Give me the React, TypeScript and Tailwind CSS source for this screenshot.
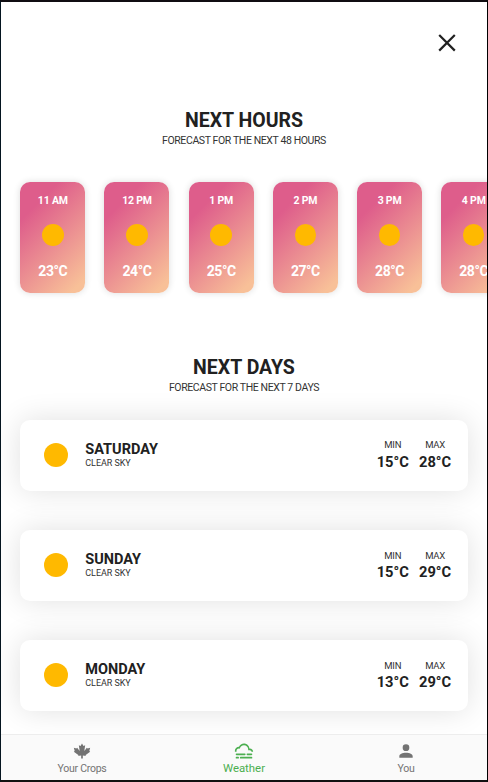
import React from "react";

const hours = [
  { time: "11 AM", temp: "23°C" },
  { time: "12 PM", temp: "24°C" },
  { time: "1 PM", temp: "25°C" },
  { time: "2 PM", temp: "27°C" },
  { time: "3 PM", temp: "28°C" },
  { time: "4 PM", temp: "28°C" },
];

const days = [
  { day: "SATURDAY", min: "15°C", max: "28°C" },
  { day: "SUNDAY", min: "15°C", max: "29°C" },
  { day: "MONDAY", min: "13°C", max: "29°C" },
];

const leaf =
  "M21.79,13L16,17L17,18L13,17.25V21H11V17.25L7,18L8,17L2.21,13L3.21,12L2.21,8L5.21,9L6.21,8L9.21,12L8.21,5L10.21,6L12,3L13.79,6L15.79,5L14.79,12L17.79,8L18.79,9L21.79,8L20.79,12L21.79,13Z";
const fog =
  "M3,15H13A1,1 0 0,1 14,16A1,1 0 0,1 13,17H3A1,1 0 0,1 2,16A1,1 0 0,1 3,15M16,15H21A1,1 0 0,1 22,16A1,1 0 0,1 21,17H16A1,1 0 0,1 15,16A1,1 0 0,1 16,15M1,12A5,5 0 0,1 6,7C7,4.65 9.3,3 12,3C15.43,3 18.24,5.66 18.5,9.03L19,9C21.19,9 22.97,10.76 23,13H21A2,2 0 0,0 19,11H17V10A5,5 0 0,0 12,5C9.5,5 7.45,6.82 7.06,9.19C6.73,9.07 6.37,9 6,9A3,3 0 0,0 3,12C3,12.35 3.06,12.69 3.17,13H1.1L1,12M3,19H5A1,1 0 0,1 6,20A1,1 0 0,1 5,21H3A1,1 0 0,1 2,20A1,1 0 0,1 3,19M8,19H21A1,1 0 0,1 22,20A1,1 0 0,1 21,21H8A1,1 0 0,1 7,20A1,1 0 0,1 8,19Z";
const person =
  "M12,4A4,4 0 0,1 16,8A4,4 0 0,1 12,12A4,4 0 0,1 8,8A4,4 0 0,1 12,4M12,14C16.42,14 20,15.79 20,18V20H4V18C4,15.79 7.58,14 12,14Z";

function Icon({ path }: { path: string }) {
  return (
    <svg viewBox="0 0 24 24" className="block size-5 fill-current">
      <path d={path} />
    </svg>
  );
}

function Heading({ title, subtitle }: { title: string; subtitle: string }) {
  return (
    <header className="flex flex-col items-center">
      <h2 className="text-[19.5px] leading-6 font-bold whitespace-nowrap">{title}</h2>
      <p className="text-[10.5px] leading-4 tracking-[-0.39px] whitespace-nowrap text-[#333]">{subtitle}</p>
    </header>
  );
}

function Temp({ label, value }: { label: string; value: string }) {
  return (
    <div className="flex w-[42.3px] flex-col items-center">
      <span className="text-[9.5px] leading-3 tracking-[-0.25px] text-[#333]">{label}</span>
      <span className="mt-[1.5px] text-[14.7px] leading-[18px] font-bold">{value}</span>
    </div>
  );
}

export default function App() {
  return (
    <div className="flex h-[782px] w-[488px] flex-col overflow-hidden border-x border-y-2 border-t-[#100d12] border-r-black border-b-[#111] border-l-[#051520] bg-white font-['Roboto',sans-serif] text-[#212121]">
      <main className="min-h-0 flex-1 overflow-hidden">
        <div className="flex justify-end pt-[29px] pr-[28.5px]">
          <button aria-label="Close" className="size-6">
            <svg viewBox="0 0 24 24" className="size-6" fill="none" stroke="currentColor" strokeWidth="2.2">
              <path d="M4.2 4 19.8 19.6M19.8 4 4.2 19.6" />
            </svg>
          </button>
        </div>

        <section className="mt-[54px]">
          <Heading title="NEXT HOURS" subtitle="FORECAST FOR THE NEXT 48 HOURS" />
          <div className="flex gap-[19.2px] overflow-hidden pt-[33px] pb-8 pl-[19.3px]">
            {hours.map((h) => (
              <article
                key={h.time}
                className="flex h-[111px] w-[65px] shrink-0 flex-col items-center rounded-[10px] bg-[linear-gradient(135deg,#de5d8b_22%,#f8c098_92%)] pt-3 text-white shadow-[0_0_7px_rgba(0,0,0,0.14)]"
              >
                <span className="text-[10.5px] leading-[14px] font-bold tracking-[-0.2px]">{h.time}</span>
                <span className="mt-4 size-[21.5px] rounded-full bg-[#ffb900]" />
                <span className="mt-[17.5px] text-[14px] leading-4 font-bold tracking-[-0.45px]">{h.temp}</span>
              </article>
            ))}
          </div>
        </section>

        <section className="mt-[31px]">
          <Heading title="NEXT DAYS" subtitle="FORECAST FOR THE NEXT 7 DAYS" />
          <div className="flex flex-col gap-[38.7px] px-[19.3px] pt-[23.5px]">
            {days.map((d) => (
              <article
                key={d.day}
                className="flex h-[71.4px] items-center rounded-[10px] bg-white pr-[11.5px] pl-[24px] shadow-[0_0_30px_rgba(0,0,0,0.12)]"
              >
                <span className="size-6 rounded-full bg-[#ffb900]" />
                <div className="ml-[17px] flex flex-1 flex-col">
                  <span className="text-[14.5px] leading-4 font-bold">{d.day}</span>
                  <span className="text-[9px] leading-[11px] tracking-[-0.05px] text-[#333]">CLEAR SKY</span>
                </div>
                <Temp label="MIN" value={d.min} />
                <Temp label="MAX" value={d.max} />
              </article>
            ))}
          </div>
        </section>
      </main>

      <nav className="z-10 flex h-[46px] shrink-0 border-t border-[#ededed] bg-[#fafafa] text-[#737373]">
        <a className="flex flex-1 flex-col items-center pt-[5.5px]">
          <Icon path={leaf} />
          <span className="mt-[1px] text-[10.5px] leading-[14px] tracking-[-0.25px]">Your Crops</span>
        </a>
        <a className="flex flex-1 flex-col items-center pt-[5.5px] text-[#4caf50]">
          <Icon path={fog} />
          <span className="text-[11.4px] leading-[14px]">Weather</span>
        </a>
        <a className="flex flex-1 flex-col items-center pt-[5.5px]">
          <Icon path={person} />
          <span className="mt-[1px] text-[10.5px] leading-[14px] tracking-[-0.25px]">You</span>
        </a>
      </nav>
    </div>
  );
}
